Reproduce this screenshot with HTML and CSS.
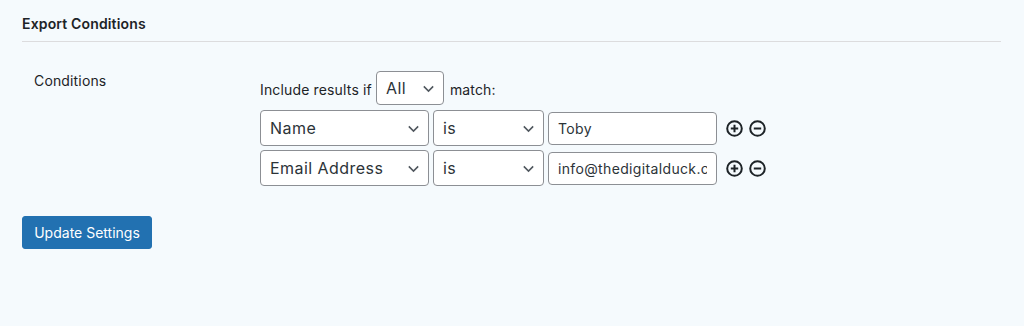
FILE: index.html
```html
<!DOCTYPE html>
<html lang="en">
<head>
    <meta charset="UTF-8">
    <title>Export Conditions</title>
    <link rel="stylesheet" href="styles.css">
</head>
<body>
    <div class="wrap">
        <h2 class="section-title">Export Conditions</h2>

        <div class="setting-row">
            <div class="setting-label">Conditions</div>
            <div class="conditions">
                <div class="include-line">
                    <span>Include results if</span>
                    <select class="match-select">
                        <option>All</option>
                    </select>
                    <span>match:</span>
                </div>

                <div class="condition-row">
                    <select class="field-select"><option>Name</option></select>
                    <select class="op-select"><option>is</option></select>
                    <input type="text" class="value-input" value="Toby">
                    <span class="row-actions">
                        <svg width="17" height="17" viewBox="0 0 17 17"><circle cx="8.5" cy="8.5" r="7.3" fill="none" stroke="#1d2327" stroke-width="2"/><path d="M8.5 4.8v7.4M4.8 8.5h7.4" stroke="#1d2327" stroke-width="2"/></svg>
                        <svg width="17" height="17" viewBox="0 0 17 17"><circle cx="8.5" cy="8.5" r="7.3" fill="none" stroke="#1d2327" stroke-width="2"/><path d="M4.8 8.5h7.4" stroke="#1d2327" stroke-width="2"/></svg>
                    </span>
                </div>

                <div class="condition-row">
                    <select class="field-select"><option>Email Address</option></select>
                    <select class="op-select"><option>is</option></select>
                    <input type="text" class="value-input" value="info@thedigitalduck.co.uk">
                    <span class="row-actions">
                        <svg width="17" height="17" viewBox="0 0 17 17"><circle cx="8.5" cy="8.5" r="7.3" fill="none" stroke="#1d2327" stroke-width="2"/><path d="M8.5 4.8v7.4M4.8 8.5h7.4" stroke="#1d2327" stroke-width="2"/></svg>
                        <svg width="17" height="17" viewBox="0 0 17 17"><circle cx="8.5" cy="8.5" r="7.3" fill="none" stroke="#1d2327" stroke-width="2"/><path d="M4.8 8.5h7.4" stroke="#1d2327" stroke-width="2"/></svg>
                    </span>
                </div>
            </div>
        </div>

        <button class="button-primary">Update Settings</button>
    </div>
</body>
</html>
```

FILE: styles.css
```css
* {
    margin: 0;
    padding: 0;
    box-sizing: border-box;
}

body {
    font-family: Inter, "Noto Sans", Arial, sans-serif;
    font-size: 14px;
    letter-spacing: 0.15px;
    background-color: #f5fafd;
    color: #3c434a;
}

.wrap {
    padding: 0 23px 0 22px;
}

.section-title {
    font-size: 14px;
    font-weight: 600;
    color: #1d2327;
    line-height: 20px;
    padding: 14px 0 7px;
    border-bottom: 1px solid #dcdcde;
}

.setting-row {
    display: flex;
    margin-top: 29px;
}

.setting-label {
    width: 238px;
    padding-left: 12px;
    line-height: 20px;
    color: #1d2327;
}

.include-line {
    display: flex;
    align-items: center;
    height: 34px;
    color: #1d2327;
}

.include-line span {
    padding-top: 3px;
}

select {
    appearance: none;
    -webkit-appearance: none;
    font-family: inherit;
    font-size: 16px;
    letter-spacing: 0.45px;
    color: #2c3338;
    border: 1px solid #8c8f94;
    border-radius: 4px;
    padding: 0 24px 0 9px;
    background: #fff url("data:image/svg+xml;utf8,<svg xmlns='http://www.w3.org/2000/svg' width='20' height='20' viewBox='0 0 20 20'><path d='M4.5 7.5l5.5 5.5 5.5-5.5' fill='none' stroke='%2350575e' stroke-width='1.8'/></svg>") no-repeat right 6px top 55%;
    background-size: 17px 17px;
}

.match-select {
    width: 68px;
    height: 34px;
    margin: 0 6px 0 4px;
}

.condition-row {
    display: flex;
    align-items: center;
    gap: 4px;
    margin-top: 4px;
}

.include-line + .condition-row {
    margin-top: 5px;
}

.field-select {
    width: 169px;
    height: 36px;
}

.op-select {
    width: 111px;
    height: 36px;
}

.value-input {
    width: 169px;
    height: 33px;
    font-family: inherit;
    font-size: 14px;
    letter-spacing: 0.35px;
    color: #2c3338;
    border: 1px solid #8c8f94;
    border-radius: 4px;
    padding: 0 9px;
    background-color: #fff;
}

.row-actions {
    display: flex;
    gap: 6px;
    margin-left: 5px;
}

.button-primary {
    margin-top: 30px;
    width: 130px;
    height: 33px;
    padding: 0;
    font-family: inherit;
    font-size: 14px;
    letter-spacing: 0;
    color: #fff;
    background-color: #2271b1;
    border: 1px solid #2271b1;
    border-radius: 3px;
    cursor: pointer;
}
```
